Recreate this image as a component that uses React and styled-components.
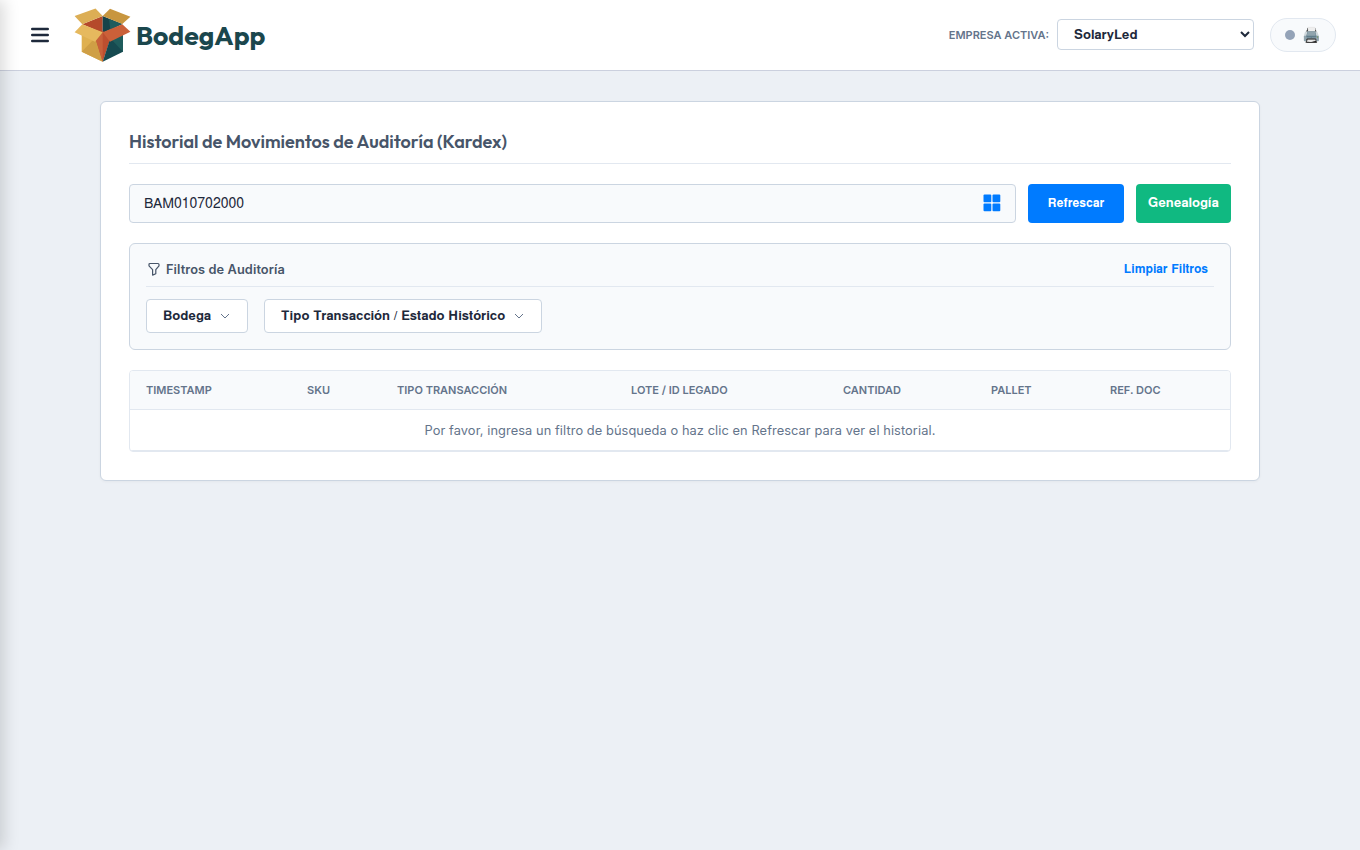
import React from "react";
import styled, { createGlobalStyle } from "styled-components";

const Global = createGlobalStyle`
  * { box-sizing: border-box; }
  body { margin: 0; background: #ecf0f5; font-family: Inter, sans-serif; color: #1e293b; overflow: hidden; }
  button, select, input { font-family: FreeSans, "Liberation Sans", Arial, sans-serif; margin: 0; }
  button, select { letter-spacing: 0.12px; }
`;
const Page = styled.div`min-height: 850px;`;
const Drawer = styled.aside`
  position: fixed; top: 0; bottom: 0; left: -280px; width: 280px; z-index: 5;
  background: #fff; box-shadow: 4px 0 15px rgba(0, 0, 0, 0.15);
`;
const Header = styled.header`
  height: 71px; padding: 0 24px; display: flex; align-items: center; justify-content: space-between;
  background: #fff; border-bottom: 1px solid #cbd0de;
`;
const Group = styled.div`display: flex; align-items: center; gap: ${(p) => p.$gap}px;`;
const MenuButton = styled.button`
  width: 32px; height: 32px; padding: 0; border: 0; background: none;
  display: flex; align-items: center; justify-content: center;
`;
const Brand = styled.div`display: flex; align-items: center; gap: 4px;`;
const BrandName = styled.span`
  font: 700 26.6px/36px Outfit, Lato, sans-serif; color: #1b474d;
`;
const CompanyLabel = styled.label`font-size: 11px; font-weight: 600; color: #64748b;`;
const CompanySelect = styled.select`
  width: 197px; height: 31px; margin-bottom: 2px; padding: 2px 12px 0; border: 1px solid #cbd5e1; border-radius: 4px;
  background: #fff; color: #1e293b; font-size: 13px; font-weight: 600;
`;
const PrinterPill = styled.div`
  width: 66px; height: 34px; border: 1px solid #e2e8f0; border-radius: 17px; background: #f8fafc;
  display: flex; align-items: center; justify-content: center; gap: 7px; font-size: 15px; line-height: 1;
`;
const PrinterGlyph = styled.span`padding-bottom: 2px;`;
const StatusDot = styled.span`width: 10px; height: 10px; border-radius: 50%; background: #94a3b8;`;
const Main = styled.main`padding: 30px 100px;`;
const Card = styled.section`
  height: 380px; padding: 28px; background: #fff; border: 1px solid #cbd5e1; border-radius: 6px;
  box-shadow: 0 1px 3px rgba(0, 0, 0, 0.04);
`;
const Title = styled.h1`
  margin: 0 0 20px; height: 34px; border-bottom: 1px solid #e2e8f0; color: #475569;
  font: 600 18px/24px Outfit, Lato, sans-serif;
`;
const SearchRow = styled.div`display: flex; gap: 12px; height: 39px;`;
const SearchBox = styled.div`
  flex: 1; display: flex; align-items: center; padding: 0 14px 1px; border: 1px solid #cbd5e1;
  border-radius: 4px; background: #f8fafc;
`;
const SearchInput = styled.input`
  flex: 1; border: 0; padding: 2px 0 0; background: none; outline: 0; color: #1e293b; font-size: 14px;
`;
const Action = styled.button`
  width: ${(p) => p.$width}px; padding: 0; border: 0; border-radius: 4px; color: #fff;
  background: ${(p) => p.$color}; font-size: ${(p) => p.$size}px; font-weight: 600;
`;
const Filters = styled.section`
  height: 107px; margin: 20px 0; padding: 16px; border: 1px solid #cbd5e1; border-radius: 6px; background: #f8fafc;
`;
const FiltersHead = styled.div`
  height: 27px; margin-bottom: 12px; padding-bottom: 8px; border-bottom: 1px solid #e2e8f0;
  display: flex; align-items: center; justify-content: space-between;
`;
const FiltersTitle = styled.div`
  display: flex; align-items: center; gap: 4px; color: #475569; font-size: 12.8px; font-weight: 600;
  letter-spacing: 0.09px;
`;
const ClearButton = styled.button`
  border: 0; padding: 0 6px; background: none; color: #007bff; font-size: 12px; font-weight: 600;
`;
const Chip = styled.button`
  height: 34px; width: ${(p) => p.$width}px; padding: 0 17px 0 16px; border: 1px solid #cbd5e1; border-radius: 4px;
  background: #fff; color: #1e293b; font-size: 13px; font-weight: 600; white-space: nowrap;
  display: flex; align-items: center; justify-content: space-between;
`;
const ChipLabel = styled.span`padding-top: 2px;`;
const TableFrame = styled.div`
  height: 82px; border: 1px solid #e2e8f0; border-radius: 4px; overflow: hidden;
`;
const Table = styled.table`width: 100%; table-layout: fixed; border-collapse: separate; border-spacing: 0;`;
const Th = styled.th`
  height: 39px; padding: 0 16px; width: ${(p) => p.$width}px; background: #f8fafc; border-bottom: 1px solid #e2e8f0;
  color: #64748b; font-size: 11px; font-weight: 600; text-align: left; white-space: nowrap;
`;
const EmptyCell = styled.td`
  height: 41px; padding: 0; border-bottom: 1px solid #e2e8f0; text-align: center; color: #64748b;
  font-size: 12.8px; letter-spacing: 0.09px;
`;

const MenuIcon = () => (
  <svg width="18" height="16" viewBox="0 0 18 16" stroke="#1e293b" strokeWidth="2.4" strokeLinecap="round">
    <path d="M1.2 2h15.6M1.2 8h15.6M1.2 14h15.6" />
  </svg>
);
const BoxLogo = () => (
  <svg width="58" height="56" viewBox="0 0 58 56">
    <path d="m8.3 17.3 20.4-8.3v17Z" fill="#b54a2b" />
    <path d="m28.7 9 19.6 8-19.6 9Z" fill="#17434a" />
    <path d="m35 12 13.3 5-12 6Z" fill="#1f5c5d" />
    <path d="M7.7 28v16.7l21 10V25.3Z" fill="#dfb050" />
    <path d="m7.7 44.7 13.6-14 7.4 24Z" fill="#cf9f45" />
    <path d="m28.7 24-7.4 7 7.4 23.7L37 30Z" fill="#bd4f2f" />
    <path d="m28.7 25.3-7.4 6 7.4 23.4Z" fill="#c8613a" />
    <path d="m37 29-8.3 25.7L49 44.7V27Z" fill="#164a50" />
    <path d="m37 32 12 12.7V28Z" fill="#1f5c5c" />
    <path d="m0.6 9 20.9-7.5L28.7 9 8.3 17.3Z" fill="#dcae55" />
    <path d="m28.7 9 7.3-7.3 20.4 8-8.1 7.3Z" fill="#c8963f" />
    <path d="m8.3 17.3 20.4 8-7.7 9.4-20.4-9.4Z" fill="#e6b95e" />
    <path d="m48.3 17.3 8.1 7.4-20.4 10-7.3-9.4Z" fill="#cb6039" />
  </svg>
);
const GridIcon = () => (
  <svg width="18" height="18" viewBox="0 0 18 18" fill="#007bff">
    <rect x="0.5" y="0.5" width="7.8" height="7.8" rx="1" /><rect x="9.5" y="0.5" width="7.8" height="7.8" rx="1" />
    <rect x="0.5" y="9.5" width="7.8" height="7.8" rx="1" /><rect x="9.5" y="9.5" width="7.8" height="7.8" rx="1" />
  </svg>
);
const FunnelIcon = () => (
  <svg width="16" height="16" viewBox="0 0 16 16" fill="none" stroke="#475569" strokeWidth="1.2" strokeLinejoin="round">
    <path d="M4 2.5h8q1 0 1 1v1.3L9.8 8.6v4.2l-3.2 1.3V8.6L3 4.8V3.5q0-1 1-1Z" />
  </svg>
);
const Chevron = () => (
  <svg width="10" height="6" viewBox="0 0 10 6" fill="none" stroke="#64748b" strokeWidth="1"><path d="m1 1 4 4 4-4" /></svg>
);

const columns = [
  ["TIMESTAMP", 161], ["SKU", 90], ["TIPO TRANSACCIÓN", 234], ["LOTE / ID LEGADO", 212],
  ["CANTIDAD", 148], ["PALLET", 119], ["REF. DOC", 136],
];

export default function App() {
  return (
    <Page>
      <Global />
      <Drawer />
      <Header>
        <Group $gap={18}>
          <MenuButton aria-label="Menú"><MenuIcon /></MenuButton>
          <Brand><BoxLogo /><BrandName>BodegApp</BrandName></Brand>
        </Group>
        <Group $gap={16}>
          <Group $gap={8}>
            <CompanyLabel>EMPRESA ACTIVA:</CompanyLabel>
            <CompanySelect><option>SolaryLed</option></CompanySelect>
          </Group>
          <PrinterPill><StatusDot /><PrinterGlyph>🖨️</PrinterGlyph></PrinterPill>
        </Group>
      </Header>
      <Main>
        <Card>
          <Title>Historial de Movimientos de Auditoría (Kardex)</Title>
          <SearchRow>
            <SearchBox><SearchInput defaultValue="BAM010702000" /><GridIcon /></SearchBox>
            <Action $width={96} $color="#007bff" $size={12}>Refrescar</Action>
            <Action $width={95} $color="#10b981" $size={13}>Genealogía</Action>
          </SearchRow>
          <Filters>
            <FiltersHead>
              <FiltersTitle><FunnelIcon />Filtros de Auditoría</FiltersTitle>
              <ClearButton>Limpiar Filtros</ClearButton>
            </FiltersHead>
            <Group $gap={16}>
              <Chip $width={102}><ChipLabel>Bodega</ChipLabel><Chevron /></Chip>
              <Chip $width={278}><ChipLabel>Tipo Transacción / Estado Histórico</ChipLabel><Chevron /></Chip>
            </Group>
          </Filters>
          <TableFrame>
            <Table>
              <thead><tr>{columns.map(([name, width]) => <Th key={name} $width={width}>{name}</Th>)}</tr></thead>
              <tbody><tr><EmptyCell colSpan={7}>Por favor, ingresa un filtro de búsqueda o haz clic en Refrescar para ver el historial.</EmptyCell></tr></tbody>
            </Table>
          </TableFrame>
        </Card>
      </Main>
    </Page>
  );
}
